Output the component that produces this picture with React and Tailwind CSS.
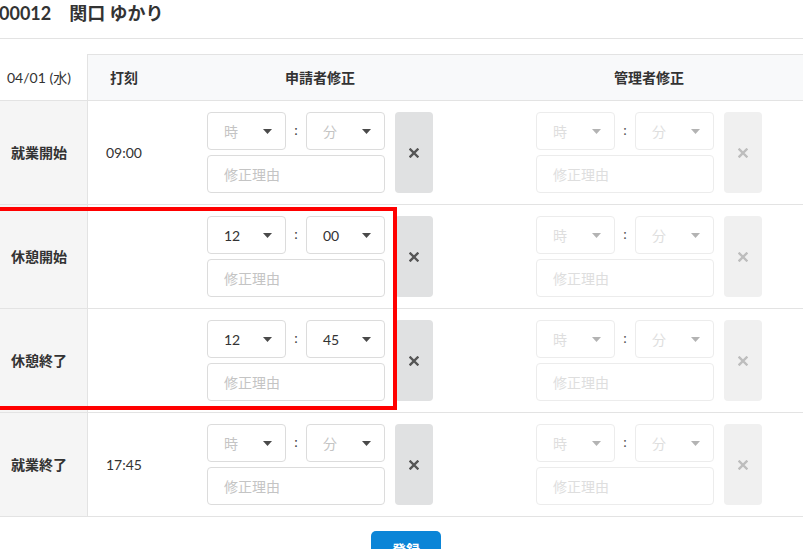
import React from 'react';

const rows = [
    { label: '就業開始', stamp: '09:00', hour: '', minute: '' },
    { label: '休憩開始', stamp: '', hour: '12', minute: '00' },
    { label: '休憩終了', stamp: '', hour: '12', minute: '45' },
    { label: '就業終了', stamp: '17:45', hour: '', minute: '' },
];

const Caret = ({ disabled }) => (
    <svg width="9" height="5" viewBox="0 0 9 5" className="shrink-0">
        <path d="M0 0h9L4.5 5z" fill={disabled ? '#b3b3b3' : '#4a4a4a'} />
    </svg>
);

const Cross = ({ disabled }) => (
    <svg width="10" height="10" viewBox="0 0 10 10">
        <path
            d="M1.5 1.5l7 7M8.5 1.5l-7 7"
            stroke={disabled ? '#bdbdbd' : '#555555'}
            strokeWidth="2.4"
            strokeLinecap="square"
        />
    </svg>
);

const TimeSelect = ({ value, placeholder, disabled }) => (
    <div
        className={`w-[79px] h-[38px] rounded-[4px] border flex items-center justify-between pl-4 pr-[13px] text-[14px] ${
            disabled ? 'border-[#ececec]' : 'border-[#dcdcdc]'
        }`}
    >
        {value ? (
            <span className="text-[#333]">{value}</span>
        ) : (
            <span className={disabled ? 'text-[#dedede]' : 'text-[#c4c4c4]'}>{placeholder}</span>
        )}
        <Caret disabled={disabled} />
    </div>
);

const EditCell = ({ hour, minute, disabled }) => (
    <div className="flex items-center justify-center">
        <div className="flex gap-[10px]">
            <div className="flex flex-col gap-[5px]">
                <div className="flex items-center">
                    <TimeSelect value={hour} placeholder="時" disabled={disabled} />
                    <span
                        className={`w-[20px] text-center text-[14px] -mt-[4px] ${
                            disabled ? 'text-[#555]' : 'text-[#444]'
                        }`}
                    >
                        :
                    </span>
                    <TimeSelect value={minute} placeholder="分" disabled={disabled} />
                </div>
                <div
                    className={`w-[178px] h-[38px] rounded-[4px] border flex items-center pl-4 text-[14px] ${
                        disabled ? 'border-[#ececec] text-[#dedede]' : 'border-[#dcdcdc] text-[#c4c4c4]'
                    }`}
                >
                    修正理由
                </div>
            </div>
            <div
                className={`w-[38px] rounded-[4px] flex items-center justify-center ${
                    disabled ? 'bg-[#f0f0f0]' : 'bg-[#e0e1e2]'
                }`}
            >
                <Cross disabled={disabled} />
            </div>
        </div>
    </div>
);

const App = () => {
    return (
        <div
            className="relative w-[803px] h-[549px] overflow-hidden bg-white text-[#333]"
            style={{ fontFamily: 'Lato, "Noto Sans CJK JP", sans-serif' }}
        >
            <div className="h-[39px] border-b border-[#e3e3e3]">
                <h1 className="text-[18px] leading-[26px] font-bold text-[#333] -ml-[1px]">
                    00012<span className="ml-[18px]">関口 ゆかり</span>
                </h1>
            </div>

            <div className="mt-[15px] w-[853px]">
                {/* header */}
                <div className="grid grid-cols-[88px_107px_250px_408px] h-[47px] border-b border-[#e3e3e3] text-[14px]">
                    <div className="flex items-center pl-[7px] border-r border-[#e3e3e3] bg-white">
                        04/01 (水)
                    </div>
                    <div className="col-span-3 grid grid-cols-[107px_250px_408px] bg-[#f8f9fa] border-t border-[#e3e3e3] font-bold">
                        <div className="flex items-center pl-[22px]">打刻</div>
                        <div className="flex items-center justify-center">申請者修正</div>
                        <div className="flex items-center justify-center">管理者修正</div>
                    </div>
                </div>

                {rows.map((row) => (
                    <div
                        key={row.label}
                        className="grid grid-cols-[88px_107px_250px_408px] h-[104px] border-b border-[#e3e3e3] text-[14px]"
                    >
                        <div className="flex items-center pl-[11px] bg-[#f5f5f5] border-r border-[#e3e3e3] font-bold">
                            {row.label}
                        </div>
                        <div className="flex items-center pl-[18px]">{row.stamp}</div>
                        <EditCell hour={row.hour} minute={row.minute} />
                        <EditCell disabled />
                    </div>
                ))}
            </div>

            <div className="mt-[14px] ml-[371px]">
                <button className="w-[70px] h-[36px] rounded-[5px] bg-[#0b85d7] text-white font-bold text-[14px]">
                    登録
                </button>
            </div>

            {/* selection highlight around the break rows */}
            <div className="absolute left-[-4px] top-[207px] w-[401px] h-[203px] border-4 border-[#ff0000] pointer-events-none" />
        </div>
    );
};

export default App;
